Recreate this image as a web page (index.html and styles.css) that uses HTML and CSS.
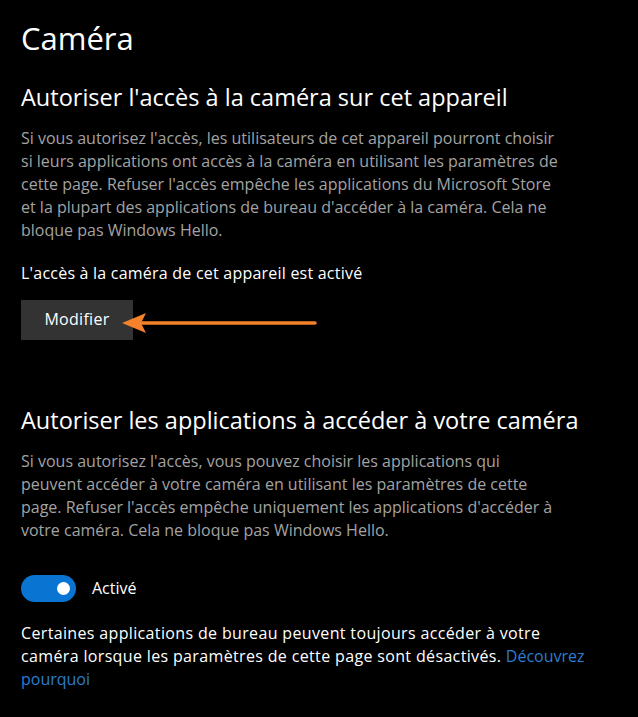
FILE: index.html
```html
<!DOCTYPE html>
<html lang="fr">
<head>
<meta charset="utf-8">
<link rel="stylesheet" href="styles.css">
</head>
<body>
<main class="page">
  <h1 class="title">Caméra</h1>

  <section class="section first">
    <h2 class="heading">Autoriser l'accès à la caméra sur cet appareil</h2>
    <p class="desc">Si vous autorisez l'accès, les utilisateurs de cet appareil pourront choisir<br>si leurs applications ont accès à la caméra en utilisant les paramètres de<br>cette page. Refuser l'accès empêche les applications du Microsoft Store<br>et la plupart des applications de bureau d'accéder à la caméra. Cela ne<br>bloque pas Windows Hello.</p>
    <p class="status">L'accès à la caméra de cet appareil est activé</p>
    <div class="button-row">
      <button class="btn">Modifier</button>
      <svg class="arrow" width="196" height="22" viewBox="0 0 196 22">
        <line x1="18" y1="11" x2="193" y2="11" stroke="#f5822a" stroke-width="3.5" stroke-linecap="round"/>
        <polygon points="0,11 24,1 19,11 24,21" fill="#f5822a"/>
      </svg>
    </div>
  </section>

  <section class="section second">
    <h2 class="heading">Autoriser les applications à accéder à votre caméra</h2>
    <p class="desc">Si vous autorisez l'accès, vous pouvez choisir les applications qui<br>peuvent accéder à votre caméra en utilisant les paramètres de cette<br>page. Refuser l'accès empêche uniquement les applications d'accéder à<br>votre caméra. Cela ne bloque pas Windows Hello.</p>
    <div class="toggle-row">
      <span class="toggle"><span class="knob"></span></span>
      <span class="toggle-label">Activé</span>
    </div>
    <p class="note">Certaines applications de bureau peuvent toujours accéder à votre<br>caméra lorsque les paramètres de cette page sont désactivés. <a class="link" href="#">Découvrez<br>pourquoi</a></p>
  </section>
</main>
</body>
</html>
```

FILE: styles.css
```css
html, body {
  margin: 0;
  padding: 0;
  background: #000;
}
body {
  font-family: "Open Sans", "Noto Sans", sans-serif;
  color: #fff;
  width: 638px;
  height: 717px;
  overflow: hidden;
}
.page {
  padding: 18px 0 0 21px;
}
.title {
  margin: 0;
  font-weight: 400;
  font-size: 31px;
  line-height: 40px;
}
.section.first {
  margin-top: 23.4px;
}
.section.second {
  margin-top: 63.9px;
}
.heading {
  margin: 0;
  font-weight: 400;
  font-size: 23.5px;
  line-height: 32px;
}
.desc {
  margin: 13.9px 0 0;
  font-size: 16px;
  line-height: 23px;
  color: #a3a3a3;
  white-space: nowrap;
}
.status {
  margin: 20px 0 0;
  font-size: 16px;
  line-height: 23px;
  letter-spacing: 0.22px;
}
.button-row {
  position: relative;
  margin-top: 14.7px;
  height: 40px;
}
.btn {
  width: 112px;
  height: 40px;
  border: 0;
  background: #333;
  color: #fff;
  font-family: inherit;
  font-size: 16px;
  letter-spacing: 0.3px;
  padding: 0 0 1px;
}
.arrow {
  position: absolute;
  left: 101px;
  top: 12px;
}
.toggle-row {
  display: flex;
  align-items: center;
  gap: 16px;
  margin-top: 33.2px;
}
.toggle {
  position: relative;
  width: 55px;
  height: 27px;
  border-radius: 14px;
  background: #0a74d2;
  display: block;
}
.knob {
  position: absolute;
  right: 6px;
  top: 7px;
  width: 13px;
  height: 13px;
  border-radius: 50%;
  background: #fff;
}
.toggle-label {
  font-size: 16px;
  line-height: 23px;
}
.note {
  margin: 20.3px 0 0;
  font-size: 16px;
  line-height: 23px;
  letter-spacing: 0.35px;
  white-space: nowrap;
}
.link {
  color: #2a7dcf;
  text-decoration: none;
  letter-spacing: 0;
}
```
